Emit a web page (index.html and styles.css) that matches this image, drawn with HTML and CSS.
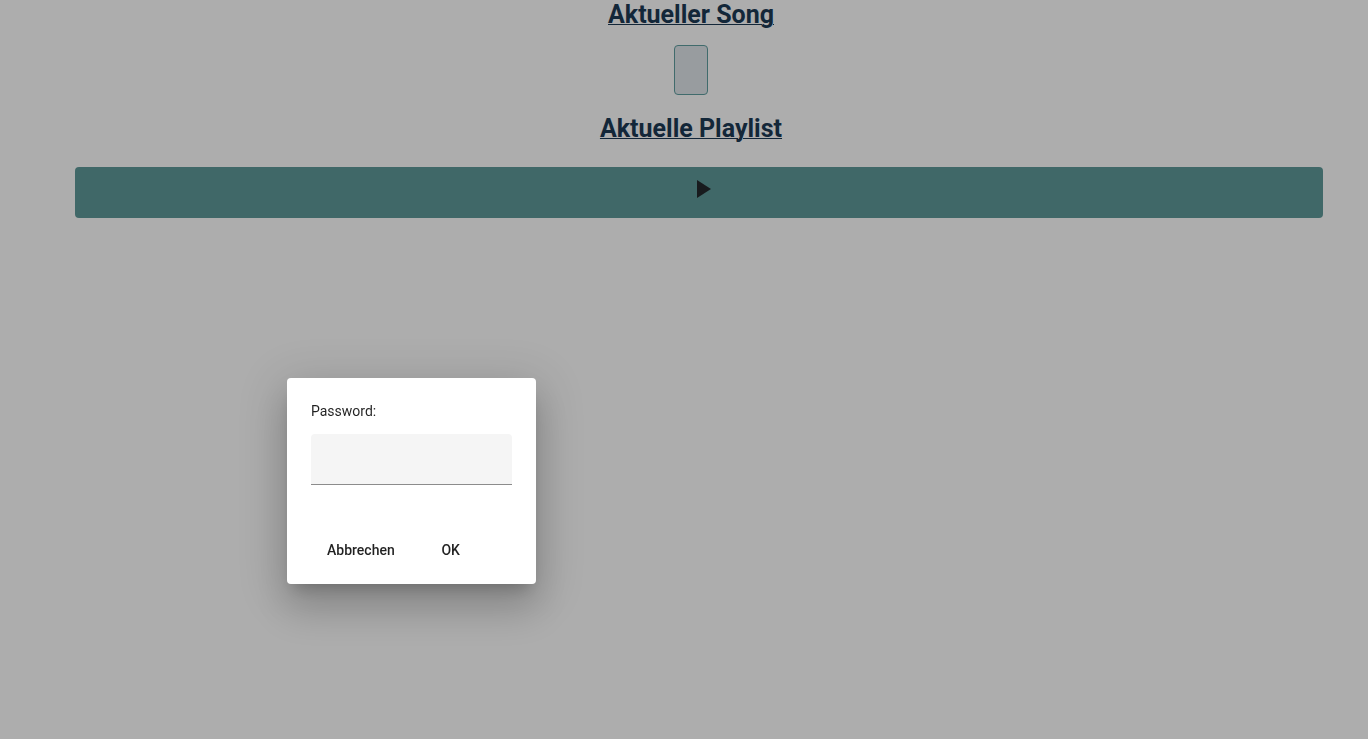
FILE: index.html
```html
<!DOCTYPE html>
<html lang="de">
<head>
<meta charset="utf-8">
<title>Aktuelle Playlist</title>
<link rel="stylesheet" href="styles.css">
</head>
<body>
<main class="page">
  <h2 class="title">Aktueller Song</h2>
  <div class="song-card"></div>
  <h2 class="title">Aktuelle Playlist</h2>
  <button class="play-bar" type="button" aria-label="Abspielen">
    <svg class="play-icon" viewBox="0 0 14 18" aria-hidden="true"><path d="M0 0v18l14-9z"/></svg>
  </button>
</main>
<div class="backdrop"></div>
<form class="dialog" role="dialog" aria-modal="true">
  <label class="dialog-label" for="password">Password:</label>
  <input class="dialog-input" id="password" type="password">
  <div class="dialog-actions">
    <button class="text-button" type="button">Abbrechen</button>
    <button class="text-button" type="submit">OK</button>
  </div>
</form>
</body>
</html>
```

FILE: styles.css
```css
* {
  box-sizing: border-box;
}

body {
  margin: 0;
  min-height: 100vh;
  background: #fff;
  font-family: Roboto, "Liberation Sans", sans-serif;
  color: rgba(0, 0, 0, 0.87);
}

.page {
  display: flex;
  flex-direction: column;
  align-items: center;
  padding: 0 45px 0 59px;
}

.title {
  margin: 0;
  font-size: 25px;
  line-height: 30px;
  font-weight: 700;
  color: #1c3a55;
  text-decoration: underline;
  text-decoration-thickness: 1px;
}

.song-card {
  width: 34px;
  height: 50px;
  margin: 15px 0 19px;
  border: 1px solid #5f9ea0;
  border-radius: 4px;
  background: #e1e6eb;
}

.play-bar {
  align-self: stretch;
  display: flex;
  justify-content: center;
  height: 51px;
  margin: 23px 0 0 16px;
  padding: 13px 0 0 10px;
  border: 0;
  border-radius: 4px;
  background: #5f9a9a;
}

.play-icon {
  width: 14px;
  height: 18px;
  fill: #24292d;
}

.backdrop {
  position: fixed;
  inset: 0;
  background: rgba(0, 0, 0, 0.32);
}

.dialog {
  position: absolute;
  top: 378px;
  left: 287px;
  display: flex;
  flex-direction: column;
  padding: 24px 24px 16px;
  border-radius: 4px;
  background: #fff;
  box-shadow: 0 11px 15px -7px rgba(0, 0, 0, 0.2), 0 24px 38px 3px rgba(0, 0, 0, 0.14), 0 9px 46px 8px rgba(0, 0, 0, 0.12);
  font-size: 14px;
}

.dialog-label {
  line-height: 18px;
}

.dialog-input {
  width: 201px;
  height: 51px;
  margin: 14px 0 0;
  padding: 0 12px;
  border: 0;
  border-bottom: 1px solid #8c8c8c;
  border-radius: 4px 4px 0 0;
  background: #f5f5f5;
  font: inherit;
  outline: 0;
}

.dialog-actions {
  display: flex;
  gap: 8px;
  margin-top: 47px;
}

.text-button {
  min-width: 64px;
  padding: 0 16px;
  border: 0;
  background: none;
  font: 500 14px/36px Roboto, "Liberation Sans", sans-serif;
  color: inherit;
}
```
